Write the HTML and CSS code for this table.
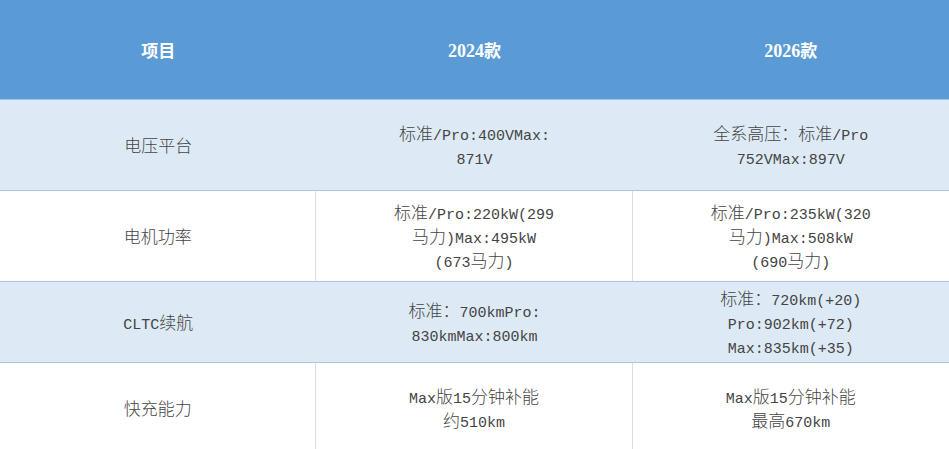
FILE: index.html
```html
<!DOCTYPE html>
<html lang="zh">
<head>
<meta charset="utf-8">
<link rel="stylesheet" href="styles.css">
</head>
<body>
<div class="table">
  <div class="row head">
    <div class="cell"><div class="txt"><span class="c">项目</span></div></div>
    <div class="cell"><div class="txt">2024<span class="c">款</span></div></div>
    <div class="cell"><div class="txt">2026<span class="c">款</span></div></div>
  </div>
  <div class="row shaded r1">
    <div class="cell"><div class="txt"><span class="c">电压平台</span></div></div>
    <div class="cell"><div class="txt"><span class="c">标准</span>/Pro:400VMax:<br>871V</div></div>
    <div class="cell"><div class="txt"><span class="c">全系高压：标准</span>/Pro<br>752VMax:897V</div></div>
  </div>
  <div class="row plain r2">
    <div class="cell"><div class="txt"><span class="c">电机功率</span></div></div>
    <div class="cell"><div class="txt"><span class="c">标准</span>/Pro:220kW(299<br><span class="c">马力</span>)Max:495kW<br>(673<span class="c">马力</span>)</div></div>
    <div class="cell"><div class="txt"><span class="c">标准</span>/Pro:235kW(320<br><span class="c">马力</span>)Max:508kW<br>(690<span class="c">马力</span>)</div></div>
  </div>
  <div class="row shaded r3">
    <div class="cell"><div class="txt">CLTC<span class="c">续航</span></div></div>
    <div class="cell"><div class="txt"><span class="c">标准：</span>700kmPro:<br>830kmMax:800km</div></div>
    <div class="cell"><div class="txt"><span class="c">标准：</span>720km(+20)<br>Pro:902km(+72)<br>Max:835km(+35)</div></div>
  </div>
  <div class="row plain r4">
    <div class="cell"><div class="txt"><span class="c">快充能力</span></div></div>
    <div class="cell"><div class="txt">Max<span class="c">版</span>15<span class="c">分钟补能</span><br><span class="c">约</span>510km</div></div>
    <div class="cell"><div class="txt">Max<span class="c">版</span>15<span class="c">分钟补能</span><br><span class="c">最高</span>670km</div></div>
  </div>
</div>
</body>
</html>
```
FILE: styles.css
```css
html, body {
  margin: 0;
  padding: 0;
  background: #ffffff;
}

.table {
  width: 949px;
  display: flex;
  flex-direction: column;
}

.row {
  display: grid;
  grid-template-columns: 1fr 1fr 1fr;
  box-sizing: border-box;
  border-bottom: 1px solid #abc5e4;
}

.cell {
  display: flex;
  align-items: center;
  justify-content: center;
  box-sizing: border-box;
}

.txt {
  text-align: center;
  font-family: "Liberation Mono", "Noto Sans CJK SC", monospace;
  font-size: 15px;
  line-height: 24px;
  color: #444444;
  padding-top: 7px;
}

.c {
  font-family: "Noto Sans CJK SC", sans-serif;
  font-size: 17px;
  font-weight: 300;
  line-height: 14px;
}

.head {
  height: 100px;
  background: #5b9bd5;
  border-bottom-color: #a3c4e8;
}

.head .txt {
  color: #ffffff;
  font-family: "Liberation Serif", "Noto Sans CJK SC", serif;
  font-weight: bold;
  font-size: 18px;
  padding-top: 2px;
}

.head .c {
  font-weight: bold;
  font-size: 17px;
}

.shaded {
  background: #ddeaf6;
}

.plain {
  background: #ffffff;
}

.plain .cell:not(:last-child) {
  border-right: 1px solid #dedede;
}

.r1 { height: 91px; }
.r2 { height: 91px; }
.r3 { height: 81px; }
.r4 { height: 91px; }
```
